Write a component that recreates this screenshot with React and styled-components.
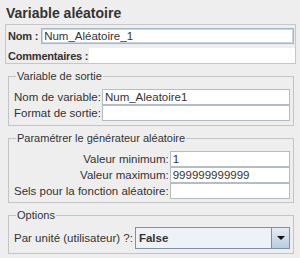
import React from "react";
import styled, { createGlobalStyle } from "styled-components";

const GlobalStyle = createGlobalStyle`
  body {
    margin: 0;
    background: #eeeeee;
    font-family: "Liberation Sans", Arial, sans-serif;
    color: #333333;
  }
`;

const sections = [
  {
    legend: "Variable de sortie",
    top: 6,
    bottom: 4,
    rows: [
      { label: "Nom de variable:", value: "Num_Aleatoire1" },
      { label: "Format de sortie:", value: "" },
    ],
  },
  {
    legend: "Paramétrer le générateur aléatoire",
    top: 6,
    bottom: 3,
    rows: [
      { label: "Valeur minimum:", value: "1" },
      { label: "Valeur maximum:", value: "999999999999" },
      { label: "Sels pour la fonction aléatoire:", value: "" },
    ],
  },
];

const App = () => {
  return (
    <Page>
      <GlobalStyle />
      <Title>Variable aléatoire</Title>

      <NameBox>
        <NameRow>
          <BoldLabel>Nom :</BoldLabel>
          <Field defaultValue="Num_Aléatoire_1" $focus />
        </NameRow>
        <NameRow>
          <BoldLabel>Commentaires :</BoldLabel>
          <CommentField />
        </NameRow>
      </NameBox>

      {sections.map((section) => (
        <Group key={section.legend} $bottom={section.bottom}>
          <Legend>{section.legend}</Legend>
          <FormGrid $top={section.top}>
            {section.rows.map((row) => (
              <React.Fragment key={row.label}>
                <Label>{row.label}</Label>
                <Field defaultValue={row.value} />
              </React.Fragment>
            ))}
          </FormGrid>
        </Group>
      ))}

      <Group $bottom={4}>
        <Legend>Options</Legend>
        <ComboRow>
          <Label>Par unité (utilisateur) ?:</Label>
          <Combo>
            <ComboText>False</ComboText>
            <ComboButton>
              <Arrow />
            </ComboButton>
          </Combo>
        </ComboRow>
      </Group>
    </Page>
  );
};

const Page = styled.div`
  padding: 0 4px 4px 5px;
  width: 291px;
`;

const Title = styled.div`
  font-size: 14px;
  font-weight: bold;
  line-height: 20px;
  padding: 3px 0 1px 1px;
`;

const NameBox = styled.div`
  border: 1px solid #c6c6c6;
  display: flex;
  flex-direction: column;
  gap: 4px;
  padding-top: 3px;
`;

const NameRow = styled.div`
  display: flex;
  align-items: center;
  gap: 3px;
  padding: 0 1px 0 2px;

  &:last-child {
    gap: 1px;
    padding-right: 0;
  }
`;

const BoldLabel = styled.span`
  font-size: 11px;
  font-weight: bold;
  letter-spacing: -0.2px;
  white-space: nowrap;
`;

const Field = styled.input`
  flex: 1;
  min-width: 0;
  height: 16px;
  box-sizing: border-box;
  border: 1px solid ${(p) => (p.$focus ? "#a3b5c9" : "#b4bcc6")};
  box-shadow: ${(p) => (p.$focus ? "inset 0 0 0 1px #c9d6e3" : "none")};
  background: #ffffff;
  font-family: "Liberation Sans", Arial, sans-serif;
  font-size: 11.5px;
  color: #333333;
  padding: 0 2px;
  margin: 0;
  outline: none;
`;

const CommentField = styled.div`
  flex: 1;
  height: 15px;
  background: #ffffff;
`;

const Group = styled.fieldset`
  margin: 5px 2px 0 3px;
  padding: 0 3px ${(p) => p.$bottom}px 5px;
  border: 1px solid #c4c4c4;
  min-width: 0;
`;

const Legend = styled.legend`
  font-size: 11px;
  line-height: 14px;
  padding: 0 1px;
  margin-left: 2px;
`;

const FormGrid = styled.div`
  display: grid;
  grid-template-columns: auto 1fr;
  column-gap: 1px;
  row-gap: 0;
  align-items: center;
  padding-top: ${(p) => p.$top}px;
`;

const Label = styled.span`
  font-size: 11.5px;
  justify-self: end;
  white-space: nowrap;
`;

const ComboRow = styled.div`
  display: flex;
  align-items: center;
  gap: 2px;
  padding-top: 5px;
`;

const Combo = styled.div`
  flex: 1;
  height: 22px;
  box-sizing: border-box;
  border: 1px solid #7d91a6;
  background: #ffffff;
  display: flex;
`;

const ComboText = styled.span`
  flex: 1;
  font-size: 11.5px;
  font-weight: bold;
  line-height: 20px;
  padding-left: 3px;
  background: #eef2f6;
  border-right: 1px solid #7d91a6;
`;

const ComboButton = styled.div`
  width: 17px;
  display: flex;
  align-items: center;
  justify-content: center;
  background: linear-gradient(#e3ecf5, #b9cde2);
`;

const Arrow = styled.span`
  width: 0;
  height: 0;
  border-left: 4px solid transparent;
  border-right: 4px solid transparent;
  border-top: 4px solid #111111;
`;

export default App;
